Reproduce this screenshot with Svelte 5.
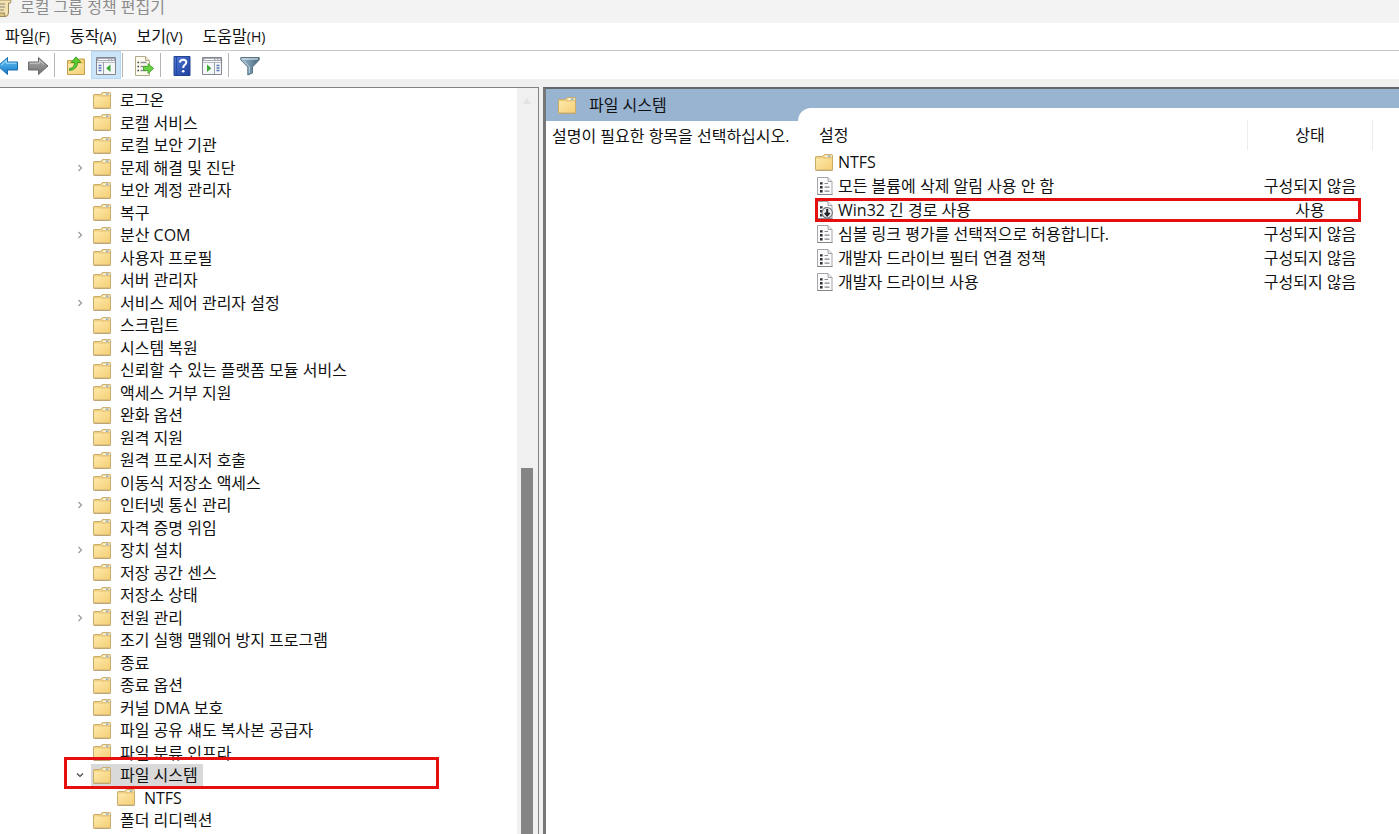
<script>
  const menus = [
    { label: '파일', key: 'F' },
    { label: '동작', key: 'A' },
    { label: '보기', key: 'V' },
    { label: '도움말', key: 'H' },
  ];

  const tree = [
    { name: '로그온' },
    { name: '로캘 서비스' },
    { name: '로컬 보안 기관' },
    { name: '문제 해결 및 진단', more: true },
    { name: '보안 계정 관리자' },
    { name: '복구' },
    { name: '분산 COM', more: true },
    { name: '사용자 프로필' },
    { name: '서버 관리자' },
    { name: '서비스 제어 관리자 설정', more: true },
    { name: '스크립트' },
    { name: '시스템 복원' },
    { name: '신뢰할 수 있는 플랫폼 모듈 서비스' },
    { name: '액세스 거부 지원' },
    { name: '완화 옵션' },
    { name: '원격 지원' },
    { name: '원격 프로시저 호출' },
    { name: '이동식 저장소 액세스' },
    { name: '인터넷 통신 관리', more: true },
    { name: '자격 증명 위임' },
    { name: '장치 설치', more: true },
    { name: '저장 공간 센스' },
    { name: '저장소 상태' },
    { name: '전원 관리', more: true },
    { name: '조기 실행 맬웨어 방지 프로그램' },
    { name: '종료' },
    { name: '종료 옵션' },
    { name: '커널 DMA 보호' },
    { name: '파일 공유 섀도 복사본 공급자' },
    { name: '파일 분류 인프라' },
    { name: '파일 시스템', open: true },
    { name: 'NTFS', nested: true },
    { name: '폴더 리디렉션' },
  ];

  const settings = [
    { name: 'NTFS', icon: 'folder', state: '' },
    { name: '모든 볼륨에 삭제 알림 사용 안 함', icon: 'policy', state: '구성되지 않음' },
    { name: 'Win32 긴 경로 사용', icon: 'enabled', state: '사용', marked: true },
    { name: '심볼 링크 평가를 선택적으로 허용합니다.', icon: 'policy', state: '구성되지 않음' },
    { name: '개발자 드라이브 필터 연결 정책', icon: 'policy', state: '구성되지 않음' },
    { name: '개발자 드라이브 사용', icon: 'policy', state: '구성되지 않음' },
  ];
</script>

{#snippet folder()}
  <svg class="folder" viewBox="0 0 18 17" width="18" height="17" aria-hidden="true">
    <path d="M.5 3.2Q.5 2.5 1.2 2.5H7.500L9.300.6H16.800Q17.500.6 17.500 1.300V15.800Q17.500 16.500 16.800 16.500H1.200Q.5 16.500.5 15.800Z" fill="#efcf80" stroke="#cbab69" />
    <path d="M1 4.500H8.600L10.200 4H17V15.600H1Z" fill="url(#paper)" />
    <path d="M9.800 2.400H16.600" stroke="#fff8e0" stroke-width="2" />
    <path d="M12.800 2.200H15.600" stroke="#8aa9bd" stroke-width="1.400" />
    <path d="M8.800 4.300L10 3.900H16.800" fill="none" stroke="#d5b065" stroke-width=".8" />
    <path d="M1 16.200H17.400" stroke="#b9a27a" />
  </svg>
{/snippet}

{#snippet policy(enabled)}
  <svg class="policy" viewBox="0 0 18 18" width="18" height="18" aria-hidden="true">
    <path d="M2.500.5H13L17 4.500V17.500H2.500Z" fill="#fcfcfd" stroke="#a2a4a8" />
    <path d="M13 .5V4.500H17" fill="#e8e9ec" stroke="#a2a4a8" />
    <path d="M2 17.500H17.500" stroke="#85878c" />
    <path d="M5 5.200H7.600V7.600H5ZM5 9H7.600V11.400H5ZM5 13H7.600V15.400H5Z" fill="#2f3038" />
    <path d="M9.600 6.500H13M9.600 10.200H14.500M9.600 14.200H14.500" stroke="#85878e" stroke-width="1.200" />
    {#if enabled}
      <circle cx="12.200" cy="11.800" r="5.200" fill="#ececef" stroke="#77797f" stroke-width="1.200" />
      <path d="M12.200 8V13.500M9.800 11.900L12.200 14.500L14.600 11.900" fill="none" stroke="#202126" stroke-width="2" />
    {/if}
  </svg>
{/snippet}

<svg class="defs" width="0" height="0" aria-hidden="true">
  <defs>
    <linearGradient id="paper" x1="0" y1="0" x2="1" y2="1">
      <stop offset="0" stop-color="#ffe9ab" /><stop offset="1" stop-color="#f3cf76" />
    </linearGradient>
    <linearGradient id="blue" x1="0" y1="0" x2="0" y2="1">
      <stop offset="0" stop-color="#6cc6f5" /><stop offset="1" stop-color="#1278c8" />
    </linearGradient>
    <linearGradient id="grey" x1="0" y1="0" x2="0" y2="1">
      <stop offset="0" stop-color="#aeaeae" /><stop offset="1" stop-color="#707070" />
    </linearGradient>
    <linearGradient id="book" x1="0" y1="0" x2="1" y2="1">
      <stop offset="0" stop-color="#4f78d8" /><stop offset="1" stop-color="#1c3f9c" />
    </linearGradient>
    <linearGradient id="steel" x1="0" y1="0" x2="1" y2="0">
      <stop offset="0" stop-color="#a9c0d0" /><stop offset=".5" stop-color="#7193aa" /><stop offset="1" stop-color="#4c6475" />
    </linearGradient>
  </defs>
</svg>

<div class="window">
  <header class="title">
    <svg viewBox="0 0 14 18" width="14" height="18" aria-hidden="true">
      <path d="M0 0H12.5Q13.5 1 12.5 3H10.5V13Q10.500 16.500 7 16.500H0Z" fill="#f3e3b0" stroke="#a08c58" />
      <path d="M0 4H7M0 7H7M0 10H6" stroke="#8a8577" />
      <path d="M0 13H6.500Q6 16.500 8 16.500H0Z" fill="#dcc583" stroke="#a08c58" />
    </svg>
    <h1>로컬 그룹 정책 편집기</h1>
  </header>

  <nav class="menu" aria-label="메뉴">
    {#each menus as m}
      <button>{m.label}<span>({m.key})</span></button>
    {/each}
  </nav>

  <div class="tools" role="toolbar" aria-label="도구 모음">
    <button aria-label="뒤로">
      <svg viewBox="0 0 22 20" width="22" height="20"><path d="M1 10L10.500 1.500V6H20.500V14H10.500V18.500Z" fill="url(#blue)" stroke="#1b6dac" stroke-linejoin="round" /><path d="M4 9.500L9.500 4.500V7.200H19.300" fill="none" stroke="#a5dffa" /></svg>
    </button>
    <button aria-label="앞으로">
      <svg viewBox="0 0 22 20" width="22" height="20"><path d="M21 10L11.500 1.500V6H1.500V14H11.500V18.500Z" fill="url(#grey)" stroke="#6a6a6a" stroke-linejoin="round" /><path d="M2.700 7.200H12.500V4.500L17 8.600" fill="none" stroke="#cacaca" /></svg>
    </button>
    <i></i>
    <button aria-label="한 수준 위로">
      <svg viewBox="0 0 20 20" width="20" height="20"><path d="M1.500 4.500H11L12.500 3H18.500V18.500H1.500Z" fill="#efcf72" stroke="#c2a04e" /><path d="M2 8H18V18H2Z" fill="url(#paper)" /><path d="M3.500 12.500Q8.500 12 8.500 6.500H5L10 .8L15 6.500H11.600Q11.500 13.500 3.500 14.500Z" fill="#5ccb32" stroke="#318f1d" stroke-width=".8" /></svg>
    </button>
    <button class="on" aria-label="콘솔 트리 표시/숨기기" aria-pressed="true">
      <svg viewBox="0 0 20 18" width="20" height="18"><path d="M.500.500H19.500V17.500H.500Z" fill="#f5f6f8" stroke="#82868f" /><path d="M1 1H19V4H1Z" fill="#a4a9b3" /><path d="M2.500 2.500H12M13.500 2.500H15M16.500 2.500H18" stroke="#fff" /><path d="M1 5.500H19" stroke="#b9bdc6" /><path d="M2.500 8.500H5.500M2.500 11H5.500M2.500 13.500H5.500" stroke="#5878b4" stroke-width="1.400" /><path d="M7.500 5V17" stroke="#9ba0aa" /><path d="M14.500 7.500V15L10.200 11.200Z" fill="#39a532" /></svg>
    </button>
    <i></i>
    <button aria-label="목록 내보내기">
      <svg viewBox="0 0 20 20" width="20" height="20"><path d="M1.500.500H11.500L15.500 4.500V19.500H1.500Z" fill="#fffdf0" stroke="#b1aa8c" /><path d="M11.500.500V4.500H15.500" fill="#eee8c8" stroke="#b1aa8c" /><path d="M3.500 6.500H5M3.500 10.500H5M3.500 14.500H5" stroke="#333" stroke-width="1.400" /><path d="M6.500 6.500H12.500M6.500 10.500H12.500M6.500 14.500H12" stroke="#8e8e98" stroke-width="1.400" /><path d="M9.500 10.500H14V7.500L19.600 12.500L14 17.500V14.500H9.500Z" fill="#69d043" stroke="#3b9d25" stroke-width=".800" /></svg>
    </button>
    <i></i>
    <button aria-label="도움말">
      <svg viewBox="0 0 18 20" width="18" height="20"><path d="M1 .500H17V19.500H1Z" fill="url(#book)" stroke="#24428e" /><path d="M3.500 1V19" stroke="#2349a6" /><path d="M7 6.400Q7 3.700 10.200 3.700Q13.300 3.700 13.300 6.300Q13.300 8 11.500 9.200Q10.200 10.100 10.200 12" fill="none" stroke="#fff" stroke-width="2" /><circle cx="10.200" cy="15.300" r="1.300" fill="#fff" /></svg>
    </button>
    <button aria-label="작업 창 표시/숨기기">
      <svg viewBox="0 0 20 18" width="20" height="18"><path d="M.500.500H19.500V17.500H.500Z" fill="#f5f6f8" stroke="#82868f" /><path d="M1 1H19V4H1Z" fill="#a4a9b3" /><path d="M2.500 2.500H12M13.500 2.500H15M16.500 2.500H18" stroke="#fff" /><path d="M1 5.500H19" stroke="#b9bdc6" /><path d="M14.500 8.500H17.500M14.500 11H17.500M14.500 13.500H17.500" stroke="#5878b4" stroke-width="1.400" /><path d="M12.500 5V17" stroke="#9ba0aa" /><path d="M5 7.500V15L9.300 11.200Z" fill="#39a532" /></svg>
    </button>
    <i></i>
    <button aria-label="필터">
      <svg viewBox="0 0 20 20" width="20" height="20"><path d="M.800 1.500H19.200V4L12.500 11V17L7.800 19V11L.800 4Z" fill="url(#steel)" stroke="#597487" stroke-linejoin="round" /><path d="M2 3H18" stroke="#dbe7ee" stroke-width="1.200" /><path d="M4 5.500L9.300 10.800V17" fill="none" stroke="#c6d8e3" /></svg>
    </button>
  </div>

  <main>
    <section class="left">
      <ul>
        {#each tree as t}
          <li class:nested={t.nested}>
            {#if t.more || t.open}
              <button class="twist" aria-label={t.name} aria-expanded={!!t.open}>
                <svg viewBox="0 0 8 8" width="8" height="8"><path d={t.open ? 'M1 2.500L4 5.500L7 2.500' : 'M2.500 1L5.500 4L2.500 7'} fill="none" stroke={t.open ? '#444' : '#999'} stroke-width="1.200" /></svg>
              </button>
            {:else}
              <span class="twist"></span>
            {/if}
            <span class="node" class:selected={t.open}>{@render folder()}<span>{t.name}</span></span>
            {#if t.open}<b class="mark"></b>{/if}
          </li>
        {/each}
      </ul>
      <div class="scroll" aria-hidden="true">
        <svg viewBox="0 0 8 6" width="8" height="6"><path d="M4 0L8 6H0Z" fill="#e2e3e4" /></svg>
        <div class="thumb"></div>
      </div>
    </section>

    <section class="right">
      <div class="about">
        <h2>{@render folder()}<span>파일 시스템</span></h2>
        <p>설명이 필요한 항목을 선택하십시오.</p>
      </div>
      <div class="band">
        <div class="sheet">
          <table>
            <thead>
              <tr><th scope="col">설정</th><th scope="col" class="state">상태</th></tr>
            </thead>
            <tbody>
              {#each settings as s}
                <tr>
                  <td>
                    <div class="name">
                      {#if s.icon === 'folder'}{@render folder()}{:else}{@render policy(s.icon === 'enabled')}{/if}
                      <span>{s.name}</span>
                    </div>
                  </td>
                  <td class="state">{s.state}{#if s.marked}<b class="mark"></b>{/if}</td>
                </tr>
              {/each}
            </tbody>
          </table>
        </div>
      </div>
    </section>
  </main>
</div>

<style>
  :global(body) {
    margin: 0;
    background: #f0f0f0;
  }
  .window {
    display: flex;
    flex-direction: column;
    height: 100vh;
    overflow: hidden;
    color: #111;
    font: 16px/22px 'Open Sans', 'Noto Sans CJK KR', sans-serif;
  }
  .defs {
    position: absolute;
  }
  h1, h2, p, ul {
    margin: 0;
    padding: 0;
    font-size: 16px;
    font-weight: 400;
    list-style: none;
  }
  button {
    border: 0;
    padding: 0;
    background: none;
    color: inherit;
    font: inherit;
  }
  svg {
    display: block;
    flex: none;
  }
  .title {
    display: flex;
    gap: 8px;
    height: 23px;
    background: #f3f3f3;
  }
  .title svg {
    margin-left: -2px;
  }
  .title h1 {
    color: #8c8c8c;
    line-height: 14px;
  }
  .menu {
    display: flex;
    gap: 20px;
    height: 27px;
    padding-left: 5px;
    background: #fff;
    border-bottom: 1px solid #c8c8c8;
  }
  .menu span {
    font-size: 14px;
  }
  .tools {
    display: flex;
    flex: none;
    height: 28px;
    margin-bottom: 8px;
    padding-right: 8px;
    background: #fff;
  }
  .tools button {
    display: grid;
    place-items: center;
    width: 30px;
    padding-top: 2px;
  }
  .tools button:first-child {
    margin-left: -7px;
  }
  .tools .on {
    background: #cce4f7;
    box-shadow: inset 0 0 0 1px #b5d9f4;
  }
  .tools i {
    width: 1px;
    margin: 2px 6px 2px 1px;
    background: #b4b4b4;
  }
  main {
    display: grid;
    grid-template-columns: minmax(0, 539fr) minmax(0, 856fr);
    gap: 4px;
    flex: 1;
    min-height: 0;
  }
  .left {
    display: flex;
    min-height: 0;
    overflow: hidden;
    background: #fff;
    border-top: 1px solid #828282;
    border-right: 1px solid #828282;
  }
  ul {
    display: grid;
    flex: 1;
    align-content: start;
    grid-auto-rows: 22px 23px;
    padding-top: 1px;
  }
  li {
    position: relative;
    display: flex;
    padding-left: 72px;
    white-space: nowrap;
  }
  .nested {
    padding-left: 96px;
  }
  .twist {
    display: grid;
    place-items: center;
    width: 16px;
    margin-right: 3px;
  }
  .node {
    display: flex;
    align-items: center;
    gap: 9px;
    padding: 0 5px 0 2px;
  }
  .selected {
    background: #d9d9d9;
  }
  .mark {
    position: absolute;
    box-sizing: border-box;
    border: 3px solid #e60f0f;
    pointer-events: none;
  }
  li .mark {
    z-index: 1;
    inset: -7px 78px -3px 64px;
  }
  .scroll {
    display: flex;
    flex-direction: column;
    align-items: center;
    box-sizing: border-box;
    width: 21px;
    padding-right: 2px;
    background: #f0f0f0;
  }
  .scroll svg {
    margin-top: 10px;
  }
  .thumb {
    width: 12px;
    height: 49%;
    margin-top: auto;
    background: #858585;
  }
  .right {
    display: grid;
    grid-template-columns: 252px minmax(0, 1fr);
    min-height: 0;
    background: #fff;
    border-top: 2px solid #62676d;
    border-left: 3px solid #777;
  }
  h2 {
    display: flex;
    align-items: center;
    gap: 13px;
    height: 32px;
    padding-left: 12px;
    background: #99b4d1;
  }
  p {
    padding: 4px 0 0 6px;
    white-space: nowrap;
  }
  .band {
    display: flex;
    flex-direction: column;
    padding-top: 19px;
    background: linear-gradient(#99b4d1 32px, #fff 32px);
  }
  .sheet {
    flex: 1;
    padding: 12px 26px 0 17px;
    background: #fff;
    border-top-left-radius: 13px;
  }
  table {
    width: 100%;
    border-collapse: collapse;
  }
  th {
    height: 30px;
    padding: 0 4px;
    border-right: 1px solid #ececec;
    font-weight: 400;
    text-align: left;
  }
  td {
    height: 24px;
    padding: 0;
  }
  tr {
    position: relative;
  }
  .state {
    width: 116px;
    text-align: center;
    white-space: nowrap;
  }
  .name {
    display: flex;
    align-items: center;
    gap: 5px;
    white-space: nowrap;
  }
  td .mark {
    inset: 0 12px 0 0;
  }
</style>
